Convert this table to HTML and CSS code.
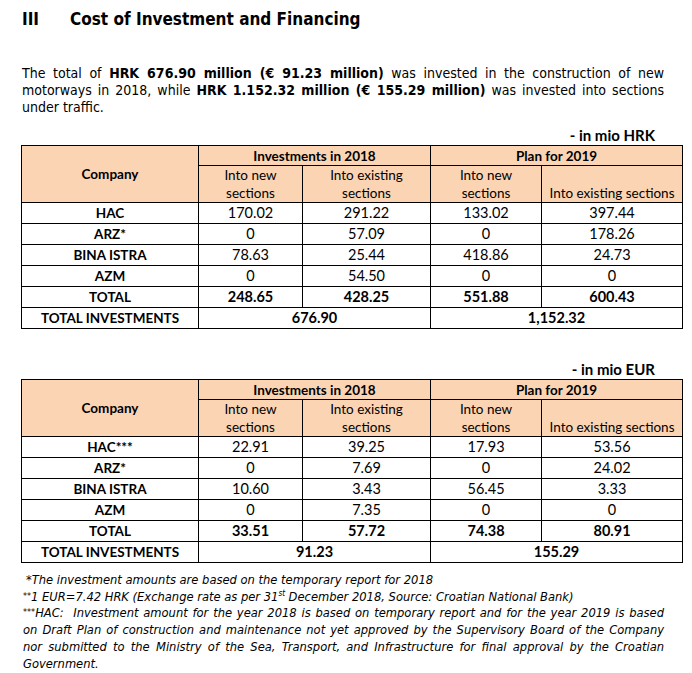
FILE: index.html
```html
<!DOCTYPE html>
<html lang="en">

<head>
    <meta charset="UTF-8">
    <meta name="viewport" content="width=device-width, initial-scale=1.0">
    <title>Cost of Investment and Financing</title>
    <link rel="stylesheet" href="styles.css">
</head>

<body>
    <div class="page">
        <h2 class="title"><span class="num">III</span>Cost of Investment and Financing</h2>

        <p class="intro">The total of <b>HRK 676.90 million (€ 91.23 million)</b> was invested in the construction of new
            motorways in 2018, while <b>HRK 1.152.32 million (€ 155.29 million)</b> was invested into sections
            under traffic.</p>

        <!-- HRK table -->
        <div class="unit">- in mio HRK</div>
        <table class="inv">
            <colgroup>
                <col class="c1">
                <col class="c2">
                <col class="c3">
                <col class="c4">
                <col class="c5">
            </colgroup>
            <thead>
                <tr class="h1">
                    <th rowspan="2" class="company">Company</th>
                    <th colspan="2">Investments in 2018</th>
                    <th colspan="2">Plan for 2019</th>
                </tr>
                <tr class="h2">
                    <td>Into new sections</td>
                    <td>Into existing sections</td>
                    <td>Into new sections</td>
                    <td class="bottom">Into existing sections</td>
                </tr>
            </thead>
            <tbody>
                <tr><th>HAC</th><td>170.02</td><td>291.22</td><td>133.02</td><td>397.44</td></tr>
                <tr><th>ARZ*</th><td>0</td><td>57.09</td><td>0</td><td>178.26</td></tr>
                <tr><th>BINA ISTRA</th><td>78.63</td><td>25.44</td><td>418.86</td><td>24.73</td></tr>
                <tr><th>AZM</th><td>0</td><td>54.50</td><td>0</td><td>0</td></tr>
                <tr class="total"><th>TOTAL</th><td>248.65</td><td>428.25</td><td>551.88</td><td>600.43</td></tr>
                <tr class="total"><th>TOTAL INVESTMENTS</th><td colspan="2">676.90</td><td colspan="2">1,152.32</td></tr>
            </tbody>
        </table>

        <!-- EUR table -->
        <div class="unit second">- in mio EUR</div>
        <table class="inv">
            <colgroup>
                <col class="c1">
                <col class="c2">
                <col class="c3">
                <col class="c4">
                <col class="c5">
            </colgroup>
            <thead>
                <tr class="h1">
                    <th rowspan="2" class="company">Company</th>
                    <th colspan="2">Investments in 2018</th>
                    <th colspan="2">Plan for 2019</th>
                </tr>
                <tr class="h2">
                    <td>Into new sections</td>
                    <td>Into existing sections</td>
                    <td>Into new sections</td>
                    <td class="bottom">Into existing sections</td>
                </tr>
            </thead>
            <tbody>
                <tr><th>HAC***</th><td>22.91</td><td>39.25</td><td>17.93</td><td>53.56</td></tr>
                <tr><th>ARZ*</th><td>0</td><td>7.69</td><td>0</td><td>24.02</td></tr>
                <tr><th>BINA ISTRA</th><td>10.60</td><td>3.43</td><td>56.45</td><td>3.33</td></tr>
                <tr><th>AZM</th><td>0</td><td>7.35</td><td>0</td><td>0</td></tr>
                <tr class="total"><th>TOTAL</th><td>33.51</td><td>57.72</td><td>74.38</td><td>80.91</td></tr>
                <tr class="total"><th>TOTAL INVESTMENTS</th><td colspan="2">91.23</td><td colspan="2">155.29</td></tr>
            </tbody>
        </table>

        <div class="notes">
            <p class="n1">*The investment amounts are based on the temporary report for 2018</p>
            <p><span class="star">**</span>1 EUR=7.42 HRK (Exchange rate as per 31<sup>st</sup> December 2018, Source: Croatian National Bank)</p>
            <p class="long">
                <span class="line"><span class="star">***</span>HAC:&nbsp; Investment amount for the year 2018 is based on temporary report and for the year 2019 is based</span>
                <span class="line">on Draft Plan of construction and maintenance not yet approved by the Supervisory Board of the Company</span>
                <span class="line">nor submitted to the Ministry of the Sea, Transport, and Infrastructure for final approval by the Croatian</span>
                <span class="line last">Government.</span>
            </p>
        </div>
    </div>
</body>

</html>
```

FILE: styles.css
```css
* {
    padding: 0;
    margin: 0;
}

body {
    background: #fff;
    color: #000;
    font-family: "DejaVu Sans Condensed", "DejaVu Sans", sans-serif;
}

.page {
    padding: 7px 0 0 21px;
    width: 661px;
}

.title {
    font-size: 17px;
    font-weight: bold;
    height: 24px;
    line-height: 24px;
}

.title .num {
    display: inline-block;
    width: 48px;
    padding-left: 1px;
}

.intro {
    margin: 34px 18px 0 1px;
    font-size: 14px;
    line-height: 17px;
    text-align: justify;
}

.unit {
    text-align: right;
    padding-right: 27px;
    margin-top: 9px;
    font-family: Lato, "Open Sans", sans-serif;
    font-weight: bold;
    font-size: 15px;
    line-height: 20px;
}

.unit.second {
    margin-top: 30px;
}

.inv {
    width: 661px;
    border-collapse: collapse;
    table-layout: fixed;
    font-family: Lato, "Open Sans", sans-serif;
    font-size: 14.5px;
}

.inv .c1 { width: 177px; }
.inv .c2 { width: 104px; }
.inv .c3 { width: 128px; }
.inv .c4 { width: 111px; }
.inv .c5 { width: 141px; }

.inv th,
.inv td {
    border: 1px solid #000;
    text-align: center;
    padding: 0 6px;
    height: 20px;
    line-height: 18px;
}

.inv th {
    font-weight: bold;
    font-size: 13.5px;
}

.inv thead th,
.inv thead td {
    background: #fbd4b4;
    font-size: 13.5px;
}

.inv .h1 th {
    height: 19px;
}

.inv .h2 td {
    height: 36px;
    font-weight: normal;
}

.inv .h2 td.bottom {
    vertical-align: bottom;
    padding: 0 2px;
}

.inv .total td {
    font-weight: bold;
}

.notes {
    margin: 9px 18px 0 2px;
    font-size: 12.8px;
    font-style: italic;
    line-height: 16.7px;
}

.notes .n1 {
    padding-left: 3px;
}

.notes .star {
    font-size: 9px;
    vertical-align: top;
    line-height: 14px;
}

.notes sup {
    font-size: 8px;
    line-height: 0;
}

.notes .line {
    display: block;
    white-space: nowrap;
    text-align: justify;
    text-align-last: justify;
}

.notes .line.last {
    text-align-last: left;
}
```
